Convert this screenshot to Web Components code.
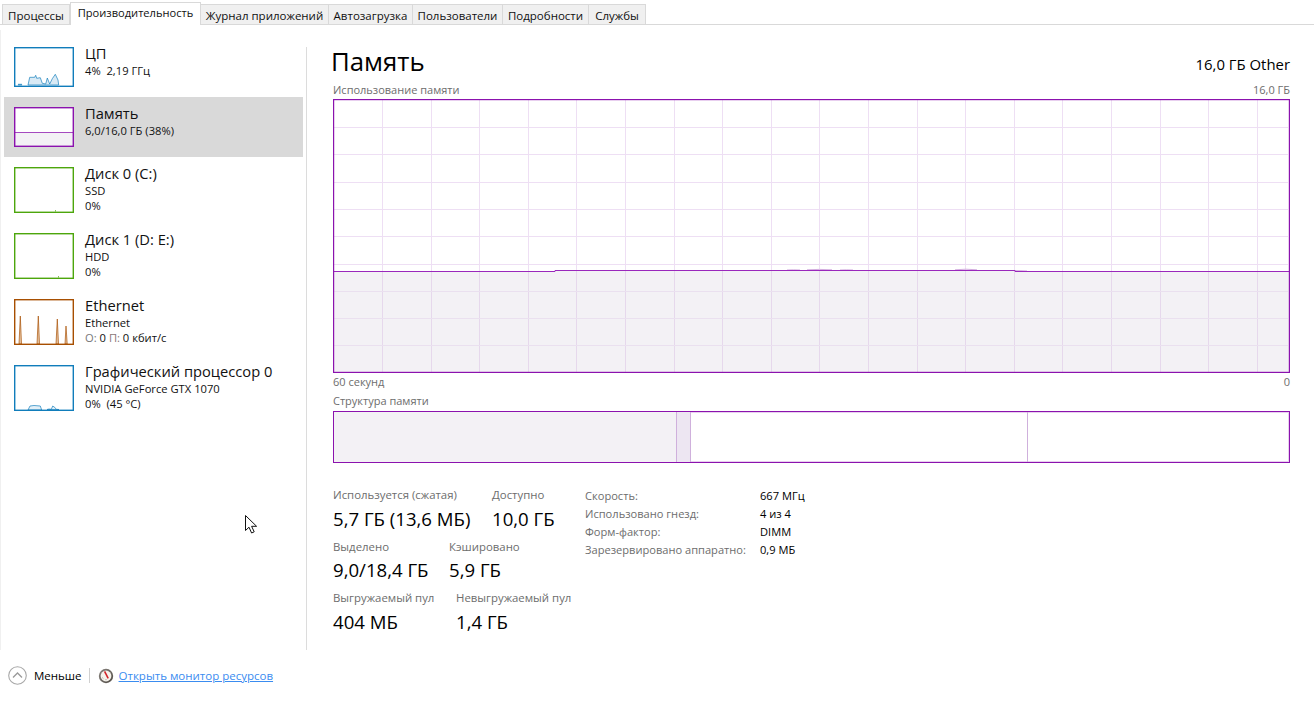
<!DOCTYPE html>
<html lang="ru">
<head>
    <meta charset="UTF-8">
    <title>Диспетчер задач</title>
    <style>
        html, body { margin: 0; height: 100%; background: #fff; }
        body { font-family: "Open Sans", "Noto Sans", sans-serif; font-size: 11.5px; color: #000; overflow: hidden; }
    </style>
</head>
<body>
    <task-manager>
        <tab-strip slot="tabs">
            <tab-item style="--w:68px">Процессы</tab-item>
            <tab-item active style="--w:131px">Производительность</tab-item>
            <tab-item style="--w:128px">Журнал приложений</tab-item>
            <tab-item style="--w:84px">Автозагрузка</tab-item>
            <tab-item style="--w:90px">Пользователи</tab-item>
            <tab-item style="--w:86px">Подробности</tab-item>
            <tab-item style="--w:57px">Службы</tab-item>
        </tab-strip>

        <side-item slot="side" name="ЦП" color="#117dbb" fill="#d9eaf5" spark="14,38 15.7,30.3 20.7,30.3 21.7,28.3 22.7,31.3 26.3,30.7 28.3,36.3 31.7,37 33.3,31 35.7,37 38.3,31.7 41.3,27.3 44,33 44.7,38 M4,38 5,36.8 6,38 7,36.8 8,38">
            <div>4%&nbsp; 2,19 ГГц</div>
        </side-item>
        <side-item slot="side" selected name="Память" color="#8b12ae" mem>
            <div>6,0/16,0 ГБ (38%)</div>
        </side-item>
        <side-item slot="side" tall name="Диск 0 (C:)" color="#4da60c" spark="41,44 41.5,43.6 42,44">
            <div>SSD</div><div>0%</div>
        </side-item>
        <side-item slot="side" tall name="Диск 1 (D: E:)" color="#4da60c" spark="44,44 44.5,43.6 45,44">
            <div>HDD</div><div>0%</div>
        </side-item>
        <side-item slot="side" tall name="Ethernet" color="#a74f01" fill="#e6c4a3" spark="5,45 6.3,17 7.5,45 M23,45 24.3,17 25.5,45 M42,45 43.3,20 44.5,45 M51,45 52,27 53.2,45">
            <div>Ethernet</div><div><span style="color:#777">О:</span> 0 <span style="color:#8a7777">П:</span> 0 кбит/с</div>
        </side-item>
        <side-item slot="side" tall name="Графический процессор 0" color="#117dbb" fill="#e3f0f8" spark="14,45 16,41 20,40.5 26.3,41 27.7,45 M33,44.5 35,44 37.3,44.3 38.7,41 40.7,42.3 42.3,44.3 45,44.5">
            <div>NVIDIA GeForce GTX 1070</div><div>0%&nbsp; (45 °C)</div>
        </side-item>

        <perf-head slot="main" title="Память" info="16,0 ГБ Other"></perf-head>
        <caption-row slot="main" left="Использование памяти" right="16,0 ГБ"></caption-row>
        <usage-graph slot="main"></usage-graph>
        <caption-row slot="main" left="60 секунд" right="0" style="margin-top:1px"></caption-row>
        <caption-row slot="main" left="Структура памяти" style="margin-top:4px"></caption-row>
        <memory-map slot="main"></memory-map>

        <stats-area slot="main">
            <div slot="left" class="row">
                <stat-block label="Используется (сжатая)" value="5,7 ГБ (13,6 МБ)" style="--w:159px"></stat-block>
                <stat-block label="Доступно" value="10,0 ГБ"></stat-block>
            </div>
            <div slot="left" class="row">
                <stat-block label="Выделено" value="9,0/18,4 ГБ" style="--w:116px"></stat-block>
                <stat-block label="Кэшировано" value="5,9 ГБ"></stat-block>
            </div>
            <div slot="left" class="row">
                <stat-block label="Выгружаемый пул" value="404 МБ" style="--w:123px"></stat-block>
                <stat-block label="Невыгружаемый пул" value="1,4 ГБ"></stat-block>
            </div>
            <spec-row slot="right" label="Скорость:" value="667 МГц"></spec-row>
            <spec-row slot="right" label="Использовано гнезд:" value="4 из 4"></spec-row>
            <spec-row slot="right" label="Форм-фактор:" value="DIMM"></spec-row>
            <spec-row slot="right" label="Зарезервировано аппаратно:" value="0,9 МБ"></spec-row>
        </stats-area>

        <foot-bar slot="foot"></foot-bar>
        <mouse-pointer slot="overlay"></mouse-pointer>
    </task-manager>

    <script>
        class TaskManager extends HTMLElement {
            constructor() {
                super();
                this.attachShadow({mode: 'open'}).innerHTML = `
                <style>
                    :host { display: grid; grid-template-rows: 25px 625px 51px; height: 701px; position: relative; overflow: hidden; }
                    .body { display: flex; min-height: 0; }
                    .side { width: 305px; box-sizing: border-box; padding: 7px 0 0 3px; margin-top: 5px; border-left: 1px solid #f0f0f0; margin-right: 1px; }
                    .sep { width: 1px; background: #dcdcdc; margin-top: 22px; }
                    .main { flex: 1; min-width: 0; padding: 0 24px 0 26px; }
                </style>
                <slot name="tabs"></slot>
                <div class="body">
                    <div class="side"><slot name="side"></slot></div>
                    <div class="sep"></div>
                    <div class="main"><slot name="main"></slot></div>
                </div>
                <slot name="foot"></slot>
                <slot name="overlay"></slot>`;
            }
        }

        class TabStrip extends HTMLElement {
            constructor() {
                super();
                this.attachShadow({mode: 'open'}).innerHTML = `
                <style>
                    :host { display: flex; align-items: flex-end; height: 25px; box-sizing: border-box; padding-left: 2px; border-bottom: 1px solid #d9d9d9; }
                </style>
                <slot></slot>`;
            }
        }

        class TabItem extends HTMLElement {
            constructor() {
                super();
                this.attachShadow({mode: 'open'}).innerHTML = `
                <style>
                    :host { display: flex; align-items: center; justify-content: center; box-sizing: border-box; width: var(--w); height: 20px; background: #f0f0f0; border: 1px solid #d9d9d9; border-bottom: 0; border-left-width: 0; white-space: nowrap; color: #111; padding-top: 1px; }
                    :host(:first-child) { border-left-width: 1px; }
                    :host([active]) { height: 23px; background: #fff; margin-bottom: -1px; border-left-width: 1px; padding-bottom: 4px; padding-top: 0; position: relative; font-size: 11.1px; }
                </style>
                <slot></slot>`;
            }
        }

        class SideItem extends HTMLElement {
            constructor() {
                super();
                const h = this.hasAttribute('tall') ? 46 : 40;
                const color = this.getAttribute('color');
                const fill = this.getAttribute('fill') || 'none';
                let inner = `<rect width="60" height="${h}" fill="#fff"/>`;
                if (this.hasAttribute('mem')) {
                    inner += `<rect x="1" y="25" width="58" height="14" fill="#f3f1f5"/><path d="M1 25.5H59" stroke="${color}" stroke-opacity=".75"/>`;
                }
                const spark = this.getAttribute('spark');
                if (spark) {
                    spark.split('M').filter(Boolean).forEach(p => {
                        inner += `<polygon points="${p.trim()}" fill="${fill}" stroke="${color}" stroke-width=".8" stroke-opacity=".85"/>`;
                    });
                }
                this.attachShadow({mode: 'open'}).innerHTML = `
                <style>
                    :host { display: flex; width: 299px; height: 60px; box-sizing: border-box; padding: 10px 0 0 10px; gap: 11px; }
                    :host([tall]) { height: 66px; }
                    :host([selected]) { background: #d9d9d9; }
                    svg { display: block; flex: none; }
                    .name { font-size: 14.7px; line-height: 16px; margin-top: -2px; white-space: nowrap; color: #111; }
                    .sub { font-size: 11.2px; line-height: 15px; margin-top: 2px; color: #111; white-space: nowrap; }
                </style>
                <svg width="60" height="${h}" viewBox="0 0 60 ${h}">
                    ${inner}
                    <rect x=".7" y=".7" width="58.6" height="${h - 1.4}" fill="none" stroke="${color}" stroke-width="1.4"/>
                </svg>
                <div>
                    <div class="name">${this.getAttribute('name')}</div>
                    <div class="sub"><slot></slot></div>
                </div>`;
            }
        }

        class PerfHead extends HTMLElement {
            constructor() {
                super();
                this.attachShadow({mode: 'open'}).innerHTML = `
                <style>
                    :host { display: flex; justify-content: space-between; align-items: flex-start; height: 57px; margin-left: -2px; }
                    .t { font-size: 25.8px; line-height: 34px; margin-top: 19px; }
                    .i { font-size: 14.9px; line-height: 20px; margin-top: 29px; white-space: nowrap; }
                </style>
                <div class="t">${this.getAttribute('title')}</div>
                <div class="i">${this.getAttribute('info')}</div>`;
            }
        }

        class CaptionRow extends HTMLElement {
            constructor() {
                super();
                this.attachShadow({mode: 'open'}).innerHTML = `
                <style>
                    :host { display: flex; justify-content: space-between; height: 15px; line-height: 15px; font-size: 11px; color: #6d6d6d; white-space: nowrap; }
                </style>
                <span>${this.getAttribute('left')}</span>
                <span>${this.getAttribute('right') || ''}</span>`;
            }
        }

        class UsageGraph extends HTMLElement {
            constructor() {
                super();
                const w = 957, h = 274, fillY = 172;
                let lines = '';
                for (let k = 0; k < 19; k++) {
                    const x = Math.round(49 + k * 48.6) + 0.5;
                    lines += `<path d="M${x} 1V${fillY}" stroke="#eedff4"/><path d="M${x} ${fillY}V${h - 1}" stroke="#e6d8ec"/>`;
                }
                for (let k = 0; k < 9; k++) {
                    const y = Math.round(28 + k * 27.3) + 0.5;
                    lines += `<path d="M1 ${y}H${w - 2}" stroke="${y > fillY ? '#eae0ef' : '#eedff4'}"/>`;
                }
                this.attachShadow({mode: 'open'}).innerHTML = `
                <style>
                    :host { display: block; height: ${h}px; margin-top: 2px; }
                    svg { display: block; }
                </style>
                <svg width="${w}" height="${h}" viewBox="0 0 ${w} ${h}">
                    <rect x="1" y="${fillY}" width="${w - 2}" height="${h - fillY}" fill="#f3f1f5"/>
                    ${lines}
                    <path d="M454 171Q460 170.6 467 171M474 170.8Q486 170 499 170.8M507 171Q513 170.6 520 171M622 170.8Q633 169.6 644 170.8M682 171.6Q688 171.6 694 172" fill="none" stroke="#d3acdf" stroke-width="1"/>
                    <path d="M1 172.5H222V171.5H682V172.5H956" fill="none" stroke="#9a28bc" stroke-width="1"/>
                    <rect x=".6" y=".6" width="${w - 1.2}" height="${h - 1.2}" fill="none" stroke="#8b12ae" stroke-width="1.2"/>
                </svg>`;
            }
        }

        class MemoryMap extends HTMLElement {
            constructor() {
                super();
                this.attachShadow({mode: 'open'}).innerHTML = `
                <style>
                    :host { display: flex; height: 52px; box-sizing: border-box; margin-top: 3px; border: 1px solid #8b12ae; box-shadow: inset 0 0 0 1px rgba(139,18,174,.2); }
                    .used { width: 342px; background: #f3f1f5; }
                    .mod { width: 13px; background: #ede6f2; border: solid #cfb0dc; border-width: 0 1px; }
                    .sb { width: 336px; border-right: 1px solid #cfb0dc; }
                    .free { flex: 1; }
                </style>
                <div class="used"></div><div class="mod"></div><div class="sb"></div><div class="free"></div>`;
            }
        }

        class StatsArea extends HTMLElement {
            constructor() {
                super();
                this.attachShadow({mode: 'open'}).innerHTML = `
                <style>
                    :host { display: flex; margin-top: 24px; }
                    .left { width: 252px; flex: none; display: grid; grid-auto-rows: 51.5px; }
                    ::slotted(.row) { display: flex; }
                </style>
                <div class="left"><slot name="left"></slot></div>
                <div><slot name="right"></slot></div>`;
            }
        }

        class StatBlock extends HTMLElement {
            constructor() {
                super();
                this.attachShadow({mode: 'open'}).innerHTML = `
                <style>
                    :host { display: block; flex: none; width: var(--w, auto); white-space: nowrap; }
                    .l { color: #6d6d6d; font-size: 11.4px; line-height: 16px; }
                    .v { font-size: 18.6px; line-height: 24px; margin-top: 3.5px; color: #000; }
                </style>
                <div class="l">${this.getAttribute('label')}</div>
                <div class="v">${this.getAttribute('value')}</div>`;
            }
        }

        class SpecRow extends HTMLElement {
            constructor() {
                super();
                this.attachShadow({mode: 'open'}).innerHTML = `
                <style>
                    :host { display: grid; grid-template-columns: 175px auto; height: 18px; line-height: 18px; white-space: nowrap; font-size: 11.1px; }
                    .l { color: #6d6d6d; }
                    .v { color: #000; }
                </style>
                <span class="l">${this.getAttribute('label')}</span>
                <span class="v">${this.getAttribute('value')}</span>`;
            }
        }

        class FootBar extends HTMLElement {
            constructor() {
                super();
                this.attachShadow({mode: 'open'}).innerHTML = `
                <style>
                    :host { display: flex; align-items: center; height: 51px; padding: 0 0 0 8px; box-sizing: border-box; white-space: nowrap; }
                    svg { display: block; flex: none; }
                    .less { margin-left: 7px; color: #000; }
                    .sep { width: 1px; height: 15px; background: #d0d0d0; margin: 0 8px 0 7px; }
                    a { margin-left: 5px; color: #3a8cf0; text-decoration: underline; }
                </style>
                <svg width="19" height="19" viewBox="0 0 19 19">
                    <circle cx="9.5" cy="9.5" r="8.8" fill="#fff" stroke="#a8a8a8" stroke-width="1.1"/>
                    <path d="M5 11.5 9.5 7l4.5 4.5" fill="none" stroke="#9a9a9a" stroke-width="1.3"/>
                </svg>
                <span class="less">Меньше</span>
                <span class="sep"></span>
                <svg width="16" height="16" viewBox="0 0 16 16">
                    <defs>
                        <linearGradient id="ring" x1="0" y1="0" x2="1" y2="1">
                            <stop offset="0" stop-color="#8a8580"/>
                            <stop offset="1" stop-color="#4f4a44"/>
                        </linearGradient>
                    </defs>
                    <circle cx="8" cy="8" r="7.2" fill="url(#ring)"/>
                    <circle cx="8" cy="8" r="5.4" fill="#f6f3ec"/>
                    <path d="M6.6 3.4 10.2 10.4" stroke="#d3262a" stroke-width="1.6"/>
                    <path d="M4.2 9.5 5.4 10.6 M8 12.2V11" stroke="#9d988e" stroke-width=".8"/>
                </svg>
                <a href="#">Открыть монитор ресурсов</a>`;
            }
        }

        class MousePointer extends HTMLElement {
            constructor() {
                super();
                this.attachShadow({mode: 'open'}).innerHTML = `
                <style>
                    :host { position: absolute; left: 245px; top: 515px; display: block; }
                    svg { display: block; }
                </style>
                <svg width="14" height="20" viewBox="0 0 14 20">
                    <path d="M.5 .5V15.5L4 12.2 6.6 18 9.2 16.8 6.6 11.3H11.6Z" fill="#fff" stroke="#111" stroke-width="1"/>
                </svg>`;
            }
        }

        customElements.define('task-manager', TaskManager);
        customElements.define('tab-strip', TabStrip);
        customElements.define('tab-item', TabItem);
        customElements.define('side-item', SideItem);
        customElements.define('perf-head', PerfHead);
        customElements.define('caption-row', CaptionRow);
        customElements.define('usage-graph', UsageGraph);
        customElements.define('memory-map', MemoryMap);
        customElements.define('stats-area', StatsArea);
        customElements.define('stat-block', StatBlock);
        customElements.define('spec-row', SpecRow);
        customElements.define('foot-bar', FootBar);
        customElements.define('mouse-pointer', MousePointer);
    </script>
</body>
</html>
